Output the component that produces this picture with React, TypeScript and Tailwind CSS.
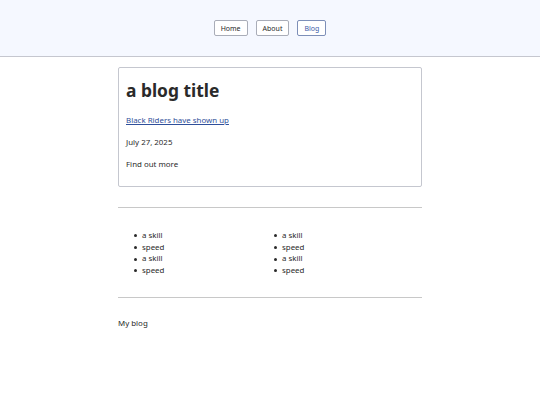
const skills = ['a skill', 'speed', 'a skill', 'speed']

function NavButton({ label, active }: { label: string; active?: boolean }) {
  return (
    <button
      className={
        active
          ? 'h-4 px-[6px] text-[7px] leading-none rounded-[2px] border border-[#7d8fb8] text-[#3b5ca8] bg-white'
          : 'h-4 px-[6px] text-[7px] leading-none rounded-[2px] border border-[#a9adb8] text-[#2a2a2a] bg-white'
      }
    >
      {label}
    </button>
  )
}

function SkillList() {
  return (
    <ul className="w-[140px] pl-4">
      {skills.map((s, i) => (
        <li key={i} className="flex items-center h-[11.7px]">
          <span className="w-[3px] h-[3px] rounded-full bg-[#2a2a2a] mr-[5px] shrink-0" />
          {s}
        </li>
      ))}
    </ul>
  )
}

export default function App() {
  return (
    <div
      className="min-h-[405px] bg-white text-[#2a2a2a] text-[7.9px]"
      style={{ fontFamily: '"Noto Sans", sans-serif' }}
    >
      {/* Header */}
      <header className="h-[57px] bg-[#f5f8ff] border-b border-[#c5c7cf] flex items-center justify-center gap-2">
        <NavButton label="Home" />
        <NavButton label="About" />
        <NavButton label="Blog" active />
      </header>

      <main className="w-[304px] mx-auto">
        {/* Card */}
        <article className="mt-[10px] h-[120px] border border-[#c5c7cf] rounded-[2px] px-[7px] pt-[10px]">
          <h1 className="text-[17.4px] font-bold leading-[24px]">a blog title</h1>
          <a href="#" className="block mt-[12px] text-[#2f4f9a] underline leading-[13px]">Black Riders have shown up</a>
          <p className="mt-[9px] leading-[13px]">July 27, 2025</p>
          <p className="mt-[9px] leading-[13px]">Find out more</p>
        </article>

        <hr className="mt-[20px] border-t border-[#c8c8c8]" />

        <div className="flex pt-[22px] pb-[20px]">
          <SkillList />
          <SkillList />
        </div>

        <hr className="border-t border-[#c8c8c8]" />

        <footer className="pt-[19px] leading-[13px]">My blog</footer>
      </main>
    </div>
  )
}
